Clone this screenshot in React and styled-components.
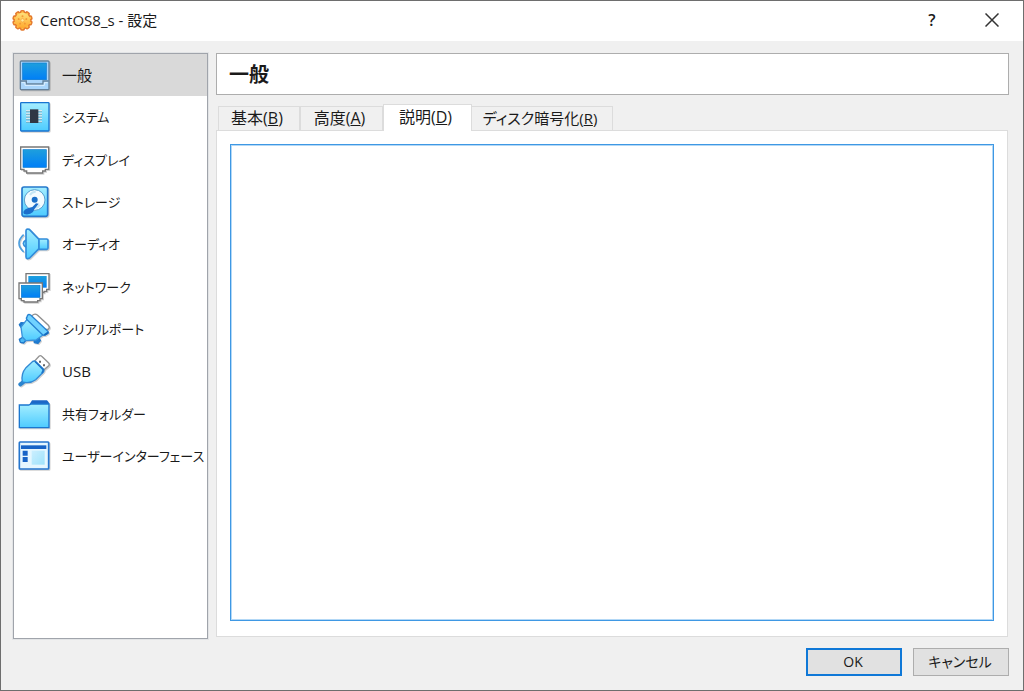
import React, { useState } from "react";
import styled, { createGlobalStyle } from "styled-components";

const GlobalStyle = createGlobalStyle`
  *, *::before, *::after { box-sizing: border-box; }
  body { margin: 0; background: #f0f0f0; }
  body, button, textarea {
    font-family: "Open Sans", "Noto Sans CJK JP", sans-serif;
    font-feature-settings: "palt";
    font-size: 15px;
    line-height: 20px;
    color: #1a1a1a;
  }
`;

const Window = styled.div`
  display: flex;
  flex-direction: column;
  min-height: 100vh;
  border: 1px solid #6e6e6e;
  background: #f0f0f0;
`;

const TitleBar = styled.header`
  display: flex;
  align-items: center;
  height: 40px;
  padding: 0 1px 2px 10px;
  background: #fff;
`;

const WindowTitle = styled.h1`
  flex: 1;
  margin: 0 0 0 6px;
  font-size: 15px;
  font-weight: 400;
`;

const CaptionButton = styled.button`
  display: flex;
  align-items: center;
  justify-content: center;
  width: 60px;
  height: 38px;
  padding: 0;
  border: 0;
  background: transparent;
  font-size: 16px;
  font-weight: 600;
`;

const Body = styled.div`
  flex: 1;
  display: grid;
  grid-template-columns: 195px minmax(0, 1fr);
  gap: 8px;
  padding: 12px 14px 0 12px;
`;

const Sidebar = styled.nav`
  border: 1px solid #a0a4ab;
  box-shadow: 0 0 0 1px #e2e4e6;
  background: #fff;
`;

const CategoryList = styled.ul`
  display: grid;
  grid-auto-rows: 1fr;
  height: 423px;
  margin: 0;
  padding: 0;
  list-style: none;
`;

const Category = styled.button`
  display: flex;
  align-items: center;
  gap: 12px;
  width: 100%;
  height: 100%;
  padding: 0 0 0 4px;
  border: 0;
  background: ${(p) => (p.$active ? "#d9d9d9" : "transparent")};
  font-size: ${(p) => p.$size}px;
  white-space: nowrap;
  text-align: left;
`;

const Content = styled.main`
  display: flex;
  flex-direction: column;
`;

const PageHeading = styled.h2`
  height: 42px;
  margin: 0 0 9px;
  padding: 0 12px;
  border: 1px solid #adadad;
  background: #fff;
  font-size: 20px;
  line-height: 42px;
  font-weight: 700;
`;

const TabList = styled.div`
  display: flex;
  align-items: flex-end;
  height: 26px;
  padding-left: 2px;
`;

const Tab = styled.button`
  width: ${(p) => p.$width}px;
  height: ${(p) => (p.$active ? 27 : 24)}px;
  margin-bottom: ${(p) => (p.$active ? -1 : 0)}px;
  padding: 0 4px 2px 0;
  border: 1px solid #dcdcdc;
  border-bottom: 0;
  border-left-width: ${(p) => (p.$joined ? 0 : 1)}px;
  background: ${(p) => (p.$active ? "#fff" : "#f0f0f0")};
  font-size: ${(p) => p.$size}px;
  white-space: nowrap;
  position: relative;
`;

const TabPanel = styled.section`
  flex: 1;
  display: flex;
  margin-right: 1px;
  margin-bottom: 2px;
  padding: 13px 13px 15px;
  border: 1px solid #dcdcdc;
  background: #fff;
`;

const Description = styled.textarea`
  flex: 1;
  min-width: 0;
  padding: 4px;
  border: 1px solid #3f98e4;
  outline: 1px solid #b3d8f6;
  outline-offset: -2px;
  border-radius: 0;
  background: #fff;
  resize: none;
`;

const Footer = styled.footer`
  display: flex;
  justify-content: flex-end;
  gap: 11px;
  padding: 9px 14px 14px;
`;

const DialogButton = styled.button`
  width: 96px;
  height: 28px;
  padding: 0 2px 0 0;
  border: ${(p) => (p.$primary ? "2px solid #0f78d7" : "1px solid #adadad")};
  background: #e1e1e1;
  font-size: 14px;
`;

const Icon = styled.svg`
  flex: none;
  width: 32px;
  height: 32px;
  overflow: visible;
  filter: drop-shadow(1px 1px 0 #0000002e);
`;

const TitleIcon = styled.svg`
  flex: none;
  width: 23px;
  height: 23px;
`;

const icons = {
  general: (
    <>
      <rect x="7" y="6" width="86" height="86" rx="3" fill="#a9d5fb" stroke="#64819b" strokeWidth="4" />
      <rect x="14" y="12" width="71" height="50" fill="url(#screen)" stroke="#0c79cf" strokeWidth="2" />
      <path d="M8 66H25V75H75V66H92" fill="none" stroke="#64819b" strokeWidth="4" />
      <path d="M11 71H21V79H79V71H89" fill="none" stroke="#dcf0ff" strokeWidth="3" />
    </>
  ),
  system: (
    <>
      <rect x="8" y="5" width="85" height="85" rx="2" fill="url(#aqua)" stroke="#1774d1" strokeWidth="4" />
      <path d="M24 29H72M24 37H72M24 45H72M24 53H72M24 61H72" stroke="#dceaf2" strokeWidth="4" />
      <path d="M24 32H72M24 40H72M24 48H72M24 56H72M24 64H72" stroke="#6f9bae" strokeWidth="2" />
      <rect x="36" y="25" width="25" height="41" fill="#303744" />
    </>
  ),
  display: (
    <>
      <path d="M8 9H92V76H82V81H74V87H26V81H18V76H8Z" fill="#fff" stroke="#777" strokeWidth="4" />
      <rect x="15" y="17" width="70" height="53" fill="url(#screen)" stroke="#087ad1" strokeWidth="2" />
    </>
  ),
  storage: (
    <>
      <rect x="12" y="3" width="77" height="88" rx="6" fill="url(#aqua)" stroke="#2478cc" strokeWidth="5" />
      <circle cx="50" cy="42" r="31" fill="#f3fbff" stroke="#5a9fcd" strokeWidth="3" />
      <path d="M36 27Q42 16 53 18M65 56Q59 66 52 65" fill="none" stroke="#c4e6f5" strokeWidth="6" />
      <circle cx="50" cy="41" r="9" fill="#1a6fc9" />
      <path d="M17 76Q14 84 22 85Q36 87 45 78L49 70L62 53L54 52L43 63L31 66Q19 70 17 76Z" fill="#1c6ecb" />
    </>
  ),
  audio: (
    <>
      <path d="M17 20Q-11 46 17 72" fill="none" stroke="#4d9fdf" strokeWidth="5" />
      <path d="M24 36Q8 46 24 57" fill="#8ee8ff" stroke="#3590da" strokeWidth="5" />
      <path d="M24 9Q24 1 34 4L63 34V62L35 90Q24 95 24 86Z" fill="url(#aqua)" stroke="#328cda" strokeWidth="5" strokeLinejoin="round" />
      <path d="M63 33H86Q90 33 90 37V60Q90 64 86 64H63Z" fill="url(#aqua)" stroke="#328cda" strokeWidth="5" />
    </>
  ),
  network: (
    <>
      <path d="M24 8H93V55H86V61H78V65H40V61H32V55H24Z" fill="#fff" stroke="#777" strokeWidth="4" />
      <rect x="31" y="15" width="55" height="35" fill="url(#screen)" />
      <path d="M3 36H73V83H66V89H59V93H18V89H10V83H3Z" fill="#fff" stroke="#777" strokeWidth="4" />
      <rect x="10" y="43" width="56" height="36" fill="url(#screen)" stroke="#087ad1" strokeWidth="2" />
    </>
  ),
  serial: (
    <>
      <path d="M42 8Q50 0 58 6L91 37Q97 44 90 49L78 49L38 13Z" fill="#fff" stroke="#909090" strokeWidth="4" />
      <path d="M20 46L8 42L4 35L9 29L22 30Z" fill="#1d7dd4" stroke="#1f78cb" strokeWidth="4" strokeLinejoin="round" />
      <path d="M15 72L4 79L7 88L17 90L27 78Z" fill="#4bb9f5" stroke="#1f78cb" strokeWidth="4" strokeLinejoin="round" />
      <path d="M48 80L49 89L60 91L67 83L62 73Z" fill="#1d7dd4" stroke="#1f78cb" strokeWidth="4" strokeLinejoin="round" />
      <path d="M29 17L9 42L13 72L24 83L54 81L80 62Z" fill="url(#aqua)" stroke="#3991db" strokeWidth="4" strokeLinejoin="round" />
      <path d="M27 12Q29 1 38 6L88 53Q94 58 87 63L82 66Q77 69 72 64L28 21Q23 17 27 12Z" fill="#70d2ff" stroke="#2682d2" strokeWidth="4" />
      <path d="M79 66L91 58" stroke="#1669bd" strokeWidth="6" />
    </>
  ),
  usb: (
    <>
      <path d="M50 18L63 4Q67 0 71 4L92 24Q96 28 92 32L77 45Z" fill="#fff" stroke="#949494" strokeWidth="4" />
      <path d="M63 17H69V23H63ZM75 28H81V34H75Z" fill="#666" />
      <path d="M15 82L7 88" stroke="#2b84ce" strokeWidth="12" strokeLinecap="round" />
      <path d="M43 20Q49 16 53 20L75 41Q80 46 76 51L53 74Q36 87 13 81Q8 57 24 38Z" fill="url(#aqua)" stroke="#3189d4" strokeWidth="4" />
      <path d="M52 20L76 44L72 55" fill="none" stroke="#1d74ca" strokeWidth="5" />
    </>
  ),
  folder: (
    <>
      <path d="M35 18L42 7H87L93 14V27H35Z" fill="#1c67c7" />
      <path d="M4 21H32L40 18H93V89H4Z" fill="url(#aqua)" stroke="#1b77d0" strokeWidth="4" />
    </>
  ),
  ui: (
    <>
      <rect x="4" y="6" width="88" height="81" rx="2" fill="#e5f7ff" stroke="#2475ce" strokeWidth="5" />
      <rect x="9" y="16" width="76" height="11" fill="#1764c7" />
      <path d="M14 32H29V47H14ZM14 51H29V66H14Z" fill="#1764c7" />
      <rect x="41" y="32" width="39" height="42" fill="url(#pane)" />
    </>
  ),
};

const categories = [
  { id: "general", label: "一般", size: 15 },
  { id: "system", label: "システム", size: 13 },
  { id: "display", label: "ディスプレイ", size: 13 },
  { id: "storage", label: "ストレージ", size: 13 },
  { id: "audio", label: "オーディオ", size: 13 },
  { id: "network", label: "ネットワーク", size: 13 },
  { id: "serial", label: "シリアルポート", size: 13 },
  { id: "usb", label: "USB", size: 15 },
  { id: "folder", label: "共有フォルダー", size: 13 },
  { id: "ui", label: "ユーザーインターフェース", size: 13 },
];

const tabs = [
  { label: "基本", mnemonic: "B", width: 82, size: 16 },
  { label: "高度", mnemonic: "A", width: 83, size: 16 },
  { label: "説明", mnemonic: "D", width: 89, size: 16 },
  { label: "ディスク暗号化", mnemonic: "R", width: 141, size: 15 },
];

const toothAngles = [0, 36, 72, 108, 144, 180, 216, 252, 288, 324];

function Gradients() {
  return (
    <defs>
      <linearGradient id="screen" x2="0" y2="1">
        <stop stopColor="#1e9fdd" />
        <stop offset="1" stopColor="#007ff7" />
      </linearGradient>
      <linearGradient id="aqua" x2="0" y2="1">
        <stop stopColor="#a5eeff" />
        <stop offset="1" stopColor="#4dcbff" />
      </linearGradient>
      <linearGradient id="pane" x2="1" y2="1">
        <stop stopColor="#ccefff" />
        <stop offset="1" stopColor="#9fe3fb" />
      </linearGradient>
      <linearGradient id="gear" x2="0" y2="1">
        <stop stopColor="#ffe07a" />
        <stop offset="1" stopColor="#ffa92e" />
      </linearGradient>
    </defs>
  );
}

function GearIcon() {
  return (
    <TitleIcon viewBox="0 0 69 69" aria-hidden="true">
      <Gradients />
      <g fill="#e57a2e">
        {toothAngles.map((a) => (
          <rect key={a} x="27" y="3" width="15" height="14" rx="5" transform={`rotate(${a} 34.5 34)`} />
        ))}
        <circle cx="34.5" cy="34" r="27" />
      </g>
      <g fill="#ffc04a">
        {toothAngles.map((a) => (
          <rect key={a} x="31" y="7" width="7" height="10" rx="3" transform={`rotate(${a} 34.5 34)`} />
        ))}
      </g>
      <circle cx="34.5" cy="34" r="23" fill="url(#gear)" />
      <g fill="#f39a35">
        {[0, 72, 144, 216, 288].map((a) => (
          <circle key={a} cx="34.5" cy="22" r="3" transform={`rotate(${a} 34.5 34)`} />
        ))}
      </g>
      <circle cx="34.5" cy="34" r="5" fill="#ffeb9a" stroke="#f5a23c" strokeWidth="2" />
    </TitleIcon>
  );
}

export default function App() {
  const [category, setCategory] = useState("general");
  const [tab, setTab] = useState("D");
  const heading = categories.find(({ id }) => id === category).label;
  const activeIndex = tabs.findIndex((t) => t.mnemonic === tab);

  return (
    <>
      <GlobalStyle />
      <Window>
        <TitleBar>
          <GearIcon />
          <WindowTitle>CentOS8_s - 設定</WindowTitle>
          <CaptionButton aria-label="ヘルプ">?</CaptionButton>
          <CaptionButton aria-label="閉じる">
            <svg width="14" height="14" viewBox="0 0 14 14" aria-hidden="true">
              <path d="M0.5 0.5L13.5 13.5M13.5 0.5L0.5 13.5" stroke="#333" strokeWidth="1.5" />
            </svg>
          </CaptionButton>
        </TitleBar>
        <Body>
          <Sidebar>
            <CategoryList>
              {categories.map(({ id, label, size }) => (
                <li key={id}>
                  <Category $active={id === category} $size={size} onClick={() => setCategory(id)}>
                    <Icon viewBox="0 0 96 96" aria-hidden="true">{icons[id]}</Icon>
                    {label}
                  </Category>
                </li>
              ))}
            </CategoryList>
          </Sidebar>
          <Content>
            <PageHeading>{heading}</PageHeading>
            <TabList role="tablist">
              {tabs.map(({ label, mnemonic, width, size }, i) => (
                <Tab
                  key={mnemonic}
                  role="tab"
                  aria-selected={mnemonic === tab}
                  $active={mnemonic === tab}
                  $joined={i === activeIndex + 1}
                  $width={width}
                  $size={size}
                  onClick={() => setTab(mnemonic)}
                >
                  {label}(<u>{mnemonic}</u>)
                </Tab>
              ))}
            </TabList>
            <TabPanel role="tabpanel">
              <Description aria-label="説明" />
            </TabPanel>
          </Content>
        </Body>
        <Footer>
          <DialogButton $primary>OK</DialogButton>
          <DialogButton>キャンセル</DialogButton>
        </Footer>
      </Window>
    </>
  );
}
